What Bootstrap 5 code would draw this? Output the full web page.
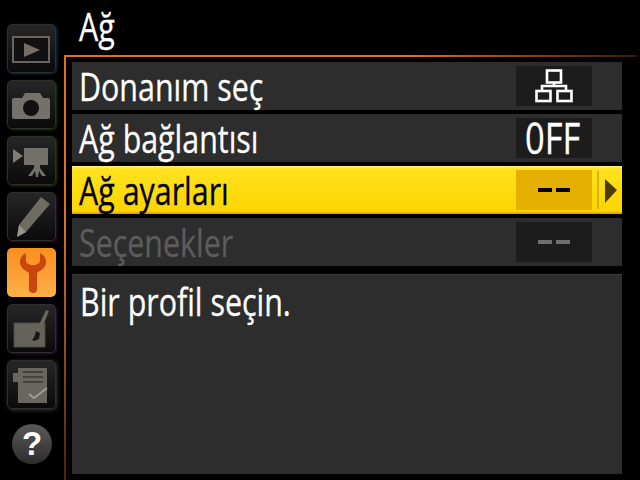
<!DOCTYPE html>
<html lang="tr">
<head>
    <meta charset="UTF-8">
    <title>Ağ</title>
    <link href="https://cdn.jsdelivr.net/npm/bootstrap@5.3.3/dist/css/bootstrap.min.css" rel="stylesheet">
    <style>
        html, body { height: 480px; }
        body {
            width: 640px;
            overflow: hidden;
            background: #000;
            color: #fff;
            font-family: "Open Sans", "Noto Sans", sans-serif;
        }
        .squeeze {
            display: inline-block;
            transform: scaleX(.8);
            transform-origin: left center;
            white-space: nowrap;
            -webkit-text-stroke: .3px currentColor;
        }
        .side-rail { width: 64px; padding: 24px 0 0 7px; gap: 7px; }
        .tile {
            width: 49px;
            height: 49px;
            border-radius: 5px;
            border: 1px solid #302f2c;
            background: linear-gradient(#262626, #0a0a0a);
        }
        .tile svg { display: block; }
        .tile-blue { box-shadow: 1px 1px 3px #0b3348; }
        .tile-green { box-shadow: 1px 1px 3px #143d10; }
        .tile-olive { box-shadow: 1px 1px 3px #33330f; }
        .tile-pink { box-shadow: 1px 1px 3px #3a0c33; }
        .tile-purple { box-shadow: 1px 1px 3px #2d0f44; }
        .tile-grey { box-shadow: 1px 1px 4px #3b3b3b; }
        .tile-on {
            border: 0;
            background: linear-gradient(#f98f1c, #fdb04a);
        }
        .help-dot {
            width: 40px;
            height: 40px;
            margin: 8px 0 0 5px;
            border-radius: 50%;
            background: linear-gradient(#5a5a5a, #2c2c2c);
            font: bold 33px/40px "Liberation Sans", sans-serif;
        }
        .main-col { width: 576px; }
        .page-title {
            height: 55px;
            margin: 0;
            padding: 2px 0 0 15px;
            font-size: 38px;
            line-height: 48px;
            font-weight: 400;
        }
        .frame {
            height: 425px;
            padding: 7px 18px 6px 8px;
            background:
                linear-gradient(90deg, #e0701a 60%, #3a1d08 99%, #000) top left / 100% 2px no-repeat,
                linear-gradient(#e0701a 40%, #4a2408 100%) top left / 2px 100% no-repeat;
        }
        .menu-row {
            height: 48px;
            margin-bottom: 4px;
            padding-left: 7px;
            background: #2d2d2d;
            font-size: 38px;
        }
        .row-label { width: 437px; line-height: 44px; }
        .value-box {
            width: 76px;
            height: 40px;
            background: #1c1c1c;
            font-size: 43px;
            line-height: 40px;
        }
        .value-text { padding-left: 9px; }
        .dash { width: 14px; height: 4px; margin: 0 2px; background: #000; }
        .menu-row.picked {
            color: #000;
            background: linear-gradient(#fff07a 0, #ffe220 6%, #fdd400 94%, #d09d00);
        }
        .picked .value-box { background: #e4af00; }
        .menu-row.off { color: #5c5c5c; }
        .off .dash { background: #6e6e6e; }
        .pick-arrow { width: 30px; padding-left: 1px; }
        .pick-arrow svg { display: block; }
        .help-box {
            height: 200px;
            margin-top: 8px;
            padding: 2px 8px;
            background: #2d2d2d;
            border-top: 1px solid #3a3a3a;
            font-size: 38px;
            line-height: 48px;
        }
    </style>
</head>
<body class="d-flex">
    <div class="side-rail d-flex flex-column">
        <div class="tile tile-blue">
            <svg width="47" height="47" viewBox="0 0 47 47"><rect x="5" y="12" width="36" height="25" fill="#111" stroke="#6a655e" stroke-width="2"/><path d="M16 18 32 25 16 32z" fill="#746e66"/></svg>
        </div>
        <div class="tile tile-green">
            <svg width="47" height="47" viewBox="0 0 47 47"><path d="M4 19q0-2 2-2h8l3-5h15l3 5h5q2 0 2 2v17q0 2-2 2H6q-2 0-2-2z" fill="#74716c"/><circle cx="23" cy="27" r="8" fill="#111"/></svg>
        </div>
        <div class="tile tile-olive">
            <svg width="47" height="47" viewBox="0 0 47 47"><path d="M5 12 15 19 5 26z" fill="#807b73"/><rect x="16" y="11" width="24" height="17" fill="#74716c"/><path d="M26 28h6v3l6 8h-4l-3-5-1 6h-2l-1-6-3 5h-4l6-8z" fill="#74716c"/></svg>
        </div>
        <div class="tile tile-pink">
            <svg width="47" height="47" viewBox="0 0 47 47"><path d="M33 4 42 11 18 39 9 44 11 32z" fill="#6f6a62"/><path d="M11 32 18 39 9 44z" fill="#9a948b"/></svg>
        </div>
        <div class="tile tile-on">
            <svg width="49" height="49" viewBox="0 0 49 49"><path d="M19 5C15 7 13 10 13 14c0 5 4 8 8 10 1 1 1 2 1 3v14c0 3 2 4 4 4s4-1 4-4V27c0-1 0-2 1-3 4-2 8-5 8-10 0-4-2-7-6-9v8c0 2-3 4-7 4s-7-2-7-4z" fill="#c9470d"/></svg>
        </div>
        <div class="tile tile-purple">
            <svg width="47" height="47" viewBox="0 0 47 47"><rect x="6" y="18" width="31" height="24" fill="#65625c" stroke="#4d4a45"/><path d="M38 5 41 6 32 28 28 26z" fill="#6a655c"/><path d="M28 26 32 28 31 34 26 36 24 35q3-3 4-9z" fill="#161616"/></svg>
        </div>
        <div class="tile tile-grey">
            <svg width="47" height="47" viewBox="0 0 47 47"><path d="M5 12h5V7h29v35H10V21H5z" fill="#69665f"/><path d="M15 11h20M15 16h20M15 21h20" stroke="#3a3936" stroke-width="1.5"/><path d="M21 33l5 4 13-10" fill="none" stroke="#a09c95" stroke-width="2"/></svg>
        </div>
        <div class="help-dot text-center">?</div>
    </div>

    <div class="main-col">
        <h1 class="page-title"><span class="squeeze">Ağ</span></h1>
        <div class="frame">
            <div class="menu-row d-flex align-items-center">
                <div class="row-label"><span class="squeeze">Donanım seç</span></div>
                <div class="value-box d-flex align-items-center justify-content-center">
                    <svg width="38" height="34" viewBox="0 0 38 34" fill="none" stroke="#fff" stroke-width="2.6"><rect x="12" y="1.5" width="14" height="12"/><path d="M19 14v3M7 22v-5h24v5"/><rect x="1.5" y="22" width="14" height="10"/><rect x="22.5" y="22" width="14" height="10"/></svg>
                </div>
            </div>
            <div class="menu-row d-flex align-items-center">
                <div class="row-label"><span class="squeeze">Ağ bağlantısı</span></div>
                <div class="value-box value-text"><span class="squeeze">0FF</span></div>
            </div>
            <div class="menu-row picked d-flex align-items-center">
                <div class="row-label"><span class="squeeze">Ağ ayarları</span></div>
                <div class="value-box d-flex align-items-center justify-content-center"><span class="dash"></span><span class="dash"></span></div>
                <div class="pick-arrow">
                    <svg width="28" height="40" viewBox="0 0 28 40"><path d="M5 1v38" stroke="#b08b10"/><path d="M12 9 24 20 12 33z" fill="#4a3f00"/></svg>
                </div>
            </div>
            <div class="menu-row off d-flex align-items-center">
                <div class="row-label"><span class="squeeze">Seçenekler</span></div>
                <div class="value-box d-flex align-items-center justify-content-center"><span class="dash"></span><span class="dash"></span></div>
            </div>
            <div class="help-box"><span class="squeeze">Bir profil seçin.</span></div>
        </div>
    </div>
    <script src="https://cdn.jsdelivr.net/npm/bootstrap@5.3.3/dist/js/bootstrap.bundle.min.js"></script>
</body>
</html>
